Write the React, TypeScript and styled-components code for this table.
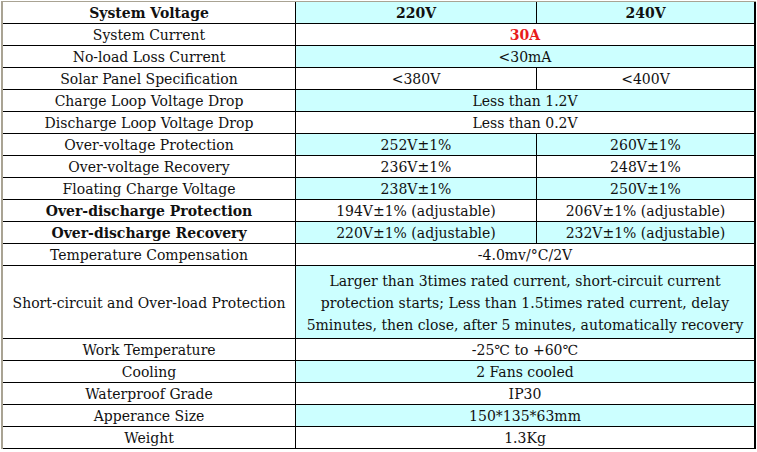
import React from 'react';
import styled, { createGlobalStyle } from 'styled-components';

const GlobalStyle = createGlobalStyle`
  html, body {
    margin: 0;
    padding: 0;
    background: #ffffff;
  }
  body {
    font-family: "DejaVu Serif", "Liberation Serif", Georgia, serif;
    color: #111;
  }
`;

const Sheet = styled.div`
  width: 757px;
  height: 452px;
  overflow: hidden;
  padding: 1px 0 0 1px;
  box-sizing: border-box;
`;

const Frame = styled.div`
  width: 755px;
  border-top: 1px solid #a9a393;
  border-left: 2px solid #a9a393;
  box-sizing: border-box;
`;

const SpecGrid = styled.div`
  display: grid;
  grid-template-columns: 292px 240px 217px;
  grid-template-rows: repeat(12, 21px) 72px repeat(5, 21px);
  gap: 1px;
  width: 751px;
  background: #000;
  border-right: 2px solid #000;
  border-bottom: 1px solid #000;
  margin-top: 0;
`;

const Cell = styled.div<{ $tint?: boolean; $bold?: boolean; $span?: boolean; $red?: boolean }>`
  display: flex;
  align-items: center;
  justify-content: center;
  text-align: center;
  background: ${({ $tint }) => ($tint ? '#ccffff' : '#ffffff')};
  font-size: 14px;
  line-height: 22px;
  font-weight: ${({ $bold }) => ($bold ? 700 : 400)};
  color: ${({ $red }) => ($red ? '#e81c1c' : '#111')};
  grid-column: ${({ $span }) => ($span ? 'span 2' : 'auto')};
  white-space: nowrap;
  padding-top: 1px;
  box-sizing: border-box;
`;

type Row = {
  label: string;
  bold?: boolean;
  values: React.ReactNode[];
  red?: boolean;
};

const rows: Row[] = [
  { label: 'System Voltage', bold: true, values: ['220V', '240V'] },
  { label: 'System Current', values: ['30A'], red: true },
  { label: 'No-load Loss Current', values: ['<30mA'] },
  { label: 'Solar Panel Specification', values: ['<380V', '<400V'] },
  { label: 'Charge Loop Voltage Drop', values: ['Less than 1.2V'] },
  { label: 'Discharge Loop Voltage Drop', values: ['Less than 0.2V'] },
  { label: 'Over-voltage Protection', values: ['252V±1%', '260V±1%'] },
  { label: 'Over-voltage Recovery', values: ['236V±1%', '248V±1%'] },
  { label: 'Floating Charge Voltage', values: ['238V±1%', '250V±1%'] },
  { label: 'Over-discharge Protection', bold: true, values: ['194V±1% (adjustable)', '206V±1% (adjustable)'] },
  { label: 'Over-discharge Recovery', bold: true, values: ['220V±1% (adjustable)', '232V±1% (adjustable)'] },
  { label: 'Temperature Compensation', values: ['-4.0mv/°C/2V'] },
  {
    label: 'Short-circuit and Over-load Protection',
    values: [
      <>
        Larger than 3times rated current, short-circuit current
        <br />
        protection starts; Less than 1.5times rated current, delay
        <br />
        5minutes, then close, after 5 minutes, automatically recovery
      </>,
    ],
  },
  { label: 'Work Temperature', values: ['-25℃ to +60℃'] },
  { label: 'Cooling', values: ['2 Fans cooled'] },
  { label: 'Waterproof Grade', values: ['IP30'] },
  { label: 'Apperance Size', values: ['150*135*63mm'] },
  { label: 'Weight', values: ['1.3Kg'] },
];

const App = () => {
  return (
    <Sheet>
      <GlobalStyle />
      <Frame>
        <SpecGrid>
          {rows.map((row, i) => {
            const tint = i % 2 === 0;
            const header = i === 0;
            return (
              <React.Fragment key={row.label}>
                <Cell $bold={row.bold}>{row.label}</Cell>
                {row.values.map((v, j) => (
                  <Cell
                    key={j}
                    $tint={tint}
                    $span={row.values.length === 1}
                    $bold={header || row.red}
                    $red={row.red}
                  >
                    {v}
                  </Cell>
                ))}
              </React.Fragment>
            );
          })}
        </SpecGrid>
      </Frame>
    </Sheet>
  );
};

export default App;
